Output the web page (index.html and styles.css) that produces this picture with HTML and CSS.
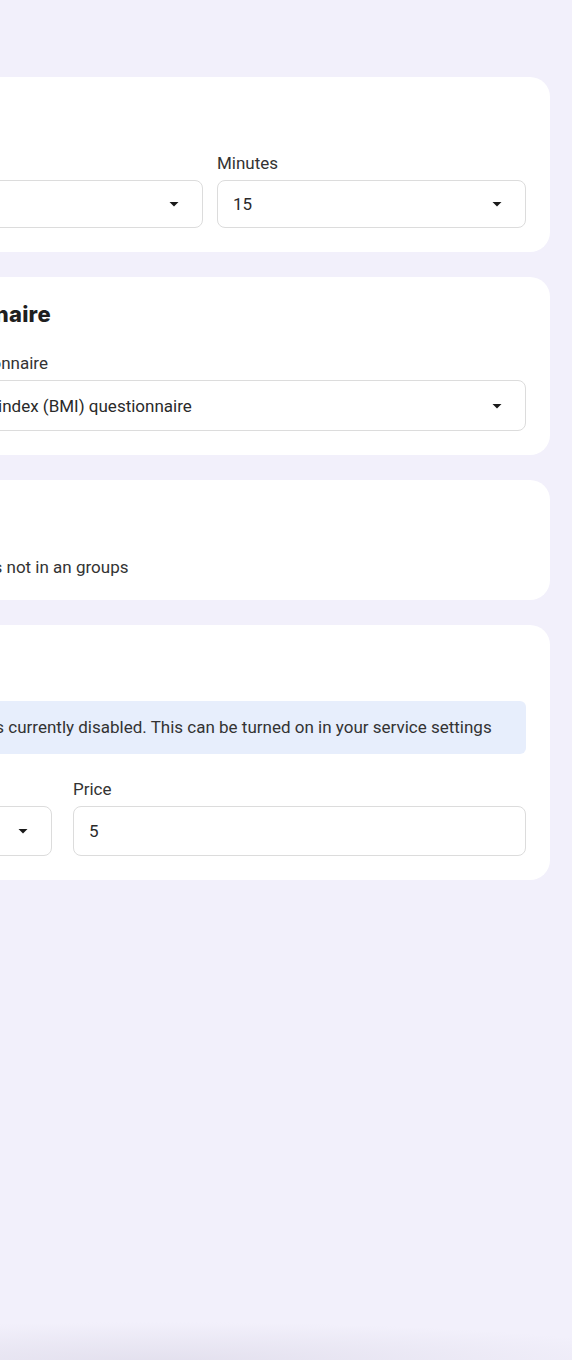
FILE: index.html
```html
<!DOCTYPE html>
<html lang="en">
<head>
<meta charset="utf-8">
<title>Service settings</title>
<link rel="stylesheet" href="styles.css">
</head>
<body>
<div class="page">
  <main class="column">
    <section class="card">
      <h2 class="card-title">Duration</h2>
      <div class="grid grid-two">
        <div class="field">
          <label class="label">Hours</label>
          <div class="select select-sm">
            <span class="value">0</span>
            <svg class="arrow" viewBox="0 0 24 24" width="24" height="24"><path d="M7.5 10l4.5 4.5 4.5-4.5z"/></svg>
          </div>
        </div>
        <div class="field">
          <label class="label">Minutes</label>
          <div class="select select-sm">
            <span class="value">15</span>
            <svg class="arrow" viewBox="0 0 24 24" width="24" height="24"><path d="M7.5 10l4.5 4.5 4.5-4.5z"/></svg>
          </div>
        </div>
      </div>
    </section>

    <section class="card">
      <h2 class="card-title">Questionnaire</h2>
      <div class="field">
        <label class="label">Select questionnaire</label>
        <div class="select">
          <span class="value">Body mass index (BMI) questionnaire</span>
          <svg class="arrow" viewBox="0 0 24 24" width="24" height="24"><path d="M7.5 10l4.5 4.5 4.5-4.5z"/></svg>
        </div>
      </div>
    </section>

    <section class="card">
      <h2 class="card-title">Groups</h2>
      <div class="check-row">
        <span class="check-text">Hide to clients not in an groups</span>
      </div>
    </section>

    <section class="card">
      <h2 class="card-title">Payment</h2>
      <div class="info">E-payment is currently disabled. This can be turned on in your service settings</div>
      <div class="grid grid-price">
        <div class="field">
          <label class="label">Currency</label>
          <div class="select">
            <span class="value">GBP</span>
            <svg class="arrow" viewBox="0 0 24 24" width="24" height="24"><path d="M7.5 10l4.5 4.5 4.5-4.5z"/></svg>
          </div>
        </div>
        <div class="field">
          <label class="label">Price</label>
          <div class="input">
            <span class="value">5</span>
          </div>
        </div>
      </div>
    </section>
  </main>
</div>
</body>
</html>
```

FILE: styles.css
```css
html, body {
  margin: 0;
  padding: 0;
}

body {
  min-height: 1360px;
  background-color: #f2f0fb;
  background-image:
    radial-gradient(ellipse 520px 40px at 160px 1362px, rgba(226, 223, 237, 0.95) 0%, rgba(242, 240, 251, 0) 100%);
  background-repeat: no-repeat;
  font-family: Roboto, "Liberation Sans", Arial, sans-serif;
  color: #2d2d2d;
  overflow: hidden;
}

.page {
  display: flex;
  justify-content: flex-end;
  padding: 77px 22px 0 0;
}

.column {
  flex: 0 0 680px;
  width: 680px;
  display: flex;
  flex-direction: column;
  gap: 25px;
}

.card {
  background: #ffffff;
  border-radius: 20px;
  padding: 24px;
  display: flex;
  flex-direction: column;
}

.card-title {
  margin: 0 0 24px;
  font-family: Inter, "Open Sans", sans-serif;
  font-weight: 800;
  font-size: 22px;
  line-height: 27px;
  padding-bottom: 1px;
  color: #1f1f1f;
  letter-spacing: 0.2px;
}

.grid {
  display: grid;
}

.grid-two {
  grid-template-columns: 1fr 1fr;
  column-gap: 14px;
}

.grid-price {
  grid-template-columns: 158px 1fr;
  column-gap: 21px;
}

.field {
  display: flex;
  flex-direction: column;
  gap: 7px;
}

.label {
  font-size: 17px;
  line-height: 20px;
  color: #333333;
}

.select,
.input {
  height: 51px;
  box-sizing: border-box;
  border: 1px solid #dcdcdc;
  border-radius: 8px;
  display: flex;
  align-items: center;
  padding: 0 16px 0 15px;
  background: #ffffff;
}

.select-sm {
  height: 48px;
}

.value {
  flex: 1;
  font-size: 17px;
  color: #2a2a2a;
  white-space: nowrap;
  overflow: hidden;
}

.arrow {
  flex: 0 0 24px;
  fill: #1a1a1a;
}

.check-row {
  display: flex;
  align-items: center;
  height: 20px;
  box-sizing: border-box;
  padding-top: 2px;
}

.check-text {
  font-size: 17px;
  color: #333333;
  white-space: nowrap;
}

.info {
  background: #e7eefc;
  border-radius: 6px;
  padding: 16px 16px 16px 13px;
  font-size: 17px;
  line-height: 21px;
  color: #333333;
  margin-bottom: 25px;
  white-space: nowrap;
}

.grid-price .input,
.grid-price .select {
  height: 50px;
}
```
